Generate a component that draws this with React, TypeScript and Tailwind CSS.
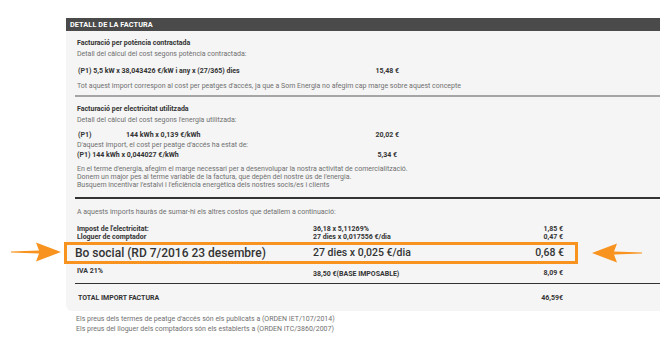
import React from 'react';

// Fila d'imports de la secció de costos addicionals
function CostRow({ label, calc, value }: { label: string; calc: string; value: string }) {
  return (
    <div className="flex w-[486px] font-bold text-[#333]">
      <span className="w-[236px]">{label}</span>
      <span className="flex-1">{calc}</span>
      <span>{value}</span>
    </div>
  );
}

function Arrow({ flip }: { flip?: boolean }) {
  return (
    <svg width="52" height="22" viewBox="0 0 52 22" className={flip ? 'scale-x-[-1]' : ''}>
      <polygon points="0,10.6 28,9.4 25,1.5 50,11 25,20.5 28,12.6 0,11.4" fill="#f7931e" />
    </svg>
  );
}

export default function App() {
  return (
    <div className="relative w-[660px] h-[346px] overflow-hidden bg-white font-[Roboto,'Liberation_Sans',sans-serif] text-[7px] leading-[8px]">
      <div className="ml-[66px] mt-[18px] w-[594px] bg-[#f5f5f5] rounded-bl-[6px]">
        <div className="h-[13px] bg-[#4a4a4a] pl-[4px] flex items-center font-bold text-white text-[7.3px] tracking-[0.1px]">
          DETALL DE LA FACTURA
        </div>

        {/* Potència */}
        <div className="pl-[11px] pt-[8px] pb-[5px]">
          <p className="font-bold text-[#333]">Facturació per potència contractada</p>
          <p className="mt-[3px] text-[#707070]">Detall del càlcul del cost segons potència contractada:</p>
          <div className="mt-[9px] flex w-[322px] justify-between font-bold text-[#333]">
            <span className="pl-[1px]">(P1) 5,5 kW x 38,043426 €/kW i any x (27/365) dies</span>
            <span>15,48 €</span>
          </div>
          <p className="mt-[7px] text-[#707070]">
            Tot aquest import correspon al cost per peatges d'accés, ja que a Som Energia no afegim cap marge sobre aquest concepte
          </p>
        </div>
        <div className="ml-[9px] h-[2px] bg-[#a5a5a5]" />

        {/* Energia */}
        <div className="pl-[11px] pt-[8px] pb-[8px]">
          <p className="font-bold text-[#333]">Facturació per electricitat utilitzada</p>
          <p className="mt-[3px] text-[#707070]">Detall del càlcul del cost segons l'energia utilitzada:</p>
          <div className="mt-[7px] flex w-[322px] font-bold text-[#333]">
            <span className="w-[49px] pl-[1px]">(P1)</span>
            <span className="flex-1">144 kWh x 0,139 €/kWh</span>
            <span>20,02 €</span>
          </div>
          <p className="mt-[2px] text-[#707070]">D'aquest import, el cost per peatge d'accés ha estat de:</p>
          <div className="mt-[2px] flex w-[320px] justify-between font-bold text-[#333]">
            <span>(P1) 144 kWh x 0,044027 €/kWh</span>
            <span>5,34 €</span>
          </div>
          <p className="mt-[6px] text-[#707070]">
            En el terme d'energia, afegim el marge necessari per a desenvolupar la nostra activitat de comercialització.
            <br />
            Donem un major pes al terme variable de la factura, que depèn del nostre ús de l'energia.
            <br />
            Busquem incentivar l'estalvi i l'eficiència energètica dels nostres socis/es i clients
          </p>
        </div>
        <div className="ml-[9px] h-[1.5px] bg-[#333]" />

        {/* Altres costos */}
        <div className="pl-[11px] pt-[9px] pb-[5px]">
          <p className="text-[#707070]">A aquests imports hauràs de sumar-hi els altres costos que detallem a continuació:</p>
          <div className="mt-[9px]">
            <CostRow label="Impost de l'electricitat:" calc="36,18 x 5,11269%" value="1,85 €" />
            <CostRow label="Lloguer de comptador" calc="27 dies x 0,017556 €/dia" value="0,47 €" />
          </div>
          <div className="-ml-[13px] mt-[1px] flex h-[22px] w-[514px] items-center border-[3px] border-[#f7931e] pl-[8px] pr-[11px] text-[#333]">
            <span className="w-[238px] text-[12px] leading-[14px] font-medium">Bo social (RD 7/2016 23 desembre)</span>
            <span className="flex-1 text-[10.5px] leading-[14px] font-medium">27 dies x 0,025 €/dia</span>
            <span className="text-[10.5px] leading-[14px] font-medium">0,68 €</span>
          </div>
          <div className="mt-[3px] flex w-[486px] font-bold text-[#333]">
            <span className="w-[236px]">IVA 21%</span>
            <span className="flex-1 mt-[3px]">38,50 €(BASE IMPOSABLE)</span>
            <span className="mt-[2px]">8,09 €</span>
          </div>
        </div>
        <div className="ml-[9px] h-[1.5px] bg-[#333]" />
        <div className="flex w-[497px] justify-between pl-[12px] pt-[10px] pb-[9px] font-bold text-[#333]">
          <span>TOTAL IMPORT FACTURA</span>
          <span>46,59€</span>
        </div>
      </div>

      <div className="pl-[76px] pt-[3px] text-[#707070] leading-[10px]">
        <p>Els preus dels termes de peatge d'accés són els publicats a (ORDEN IET/107/2014)</p>
        <p>Els preus del lloguer dels comptadors són els establerts a (ORDEN ITC/3860/2007)</p>
      </div>

      <div className="absolute left-[11px] top-[241px]">
        <Arrow />
      </div>
      <div className="absolute left-[590px] top-[242px]">
        <Arrow flip />
      </div>
    </div>
  );
}
